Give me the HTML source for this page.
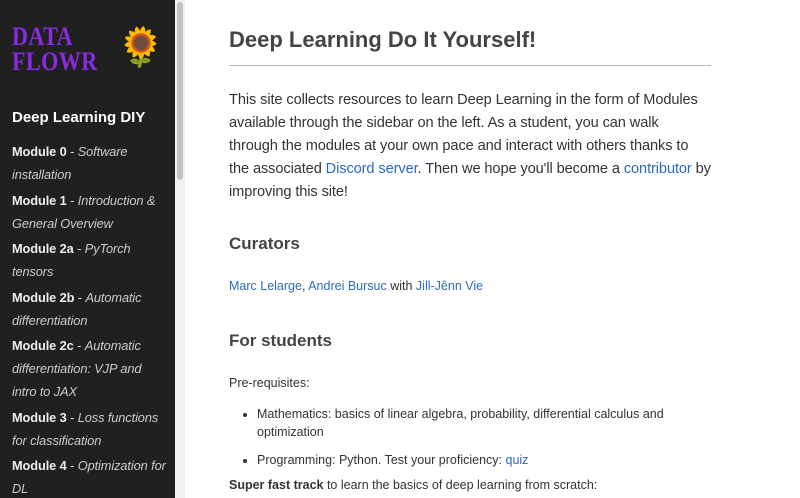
<!DOCTYPE html>
<html><head><style>
body{margin:0;width:800px;height:498px;overflow:hidden;font-family:"Liberation Sans",sans-serif;background:#fff;}
#side{position:absolute;left:0;top:0;width:175px;height:498px;background:#202020;color:#ddd;overflow:hidden;}
#sb{position:absolute;left:175px;top:0;width:10px;height:498px;background:#f0f0f0;}
#thumb{position:absolute;left:2px;top:2px;width:6px;height:178px;background:#c2c2c2;border-radius:3px;}
.logo{position:absolute;left:12px;top:24px;color:#8a2be2;font-family:"Liberation Serif",serif;font-weight:bold;font-size:26px;line-height:25px;letter-spacing:0.5px;transform:scaleX(0.85);transform-origin:left;}
.sun{position:absolute;left:117px;top:28px;font-size:38px;line-height:40px;}
.diy{position:absolute;left:12px;top:109px;color:#fff;font-weight:bold;font-size:15px;}
.mods{position:absolute;left:12px;top:140px;font-size:12.8px;line-height:23px;white-space:nowrap;letter-spacing:-0.1px;}
.mods div{margin-bottom:2.5px;}
.mods b{color:#eee;}
.mods i{color:#ccc;}
#main{position:absolute;left:229px;top:0;width:482px;color:#333;}
h1{margin:27px 0 0;font-size:22px;color:#444;padding-bottom:12px;border-bottom:1px solid #bbb;}
p.intro{margin:23px 0 0;font-size:14.6px;line-height:23px;white-space:nowrap;letter-spacing:-0.1px;}
a{color:#2a6ac4;text-decoration:none;}
h2{font-size:17px;color:#444;margin:0;position:absolute;left:0;}
.sm{font-size:12.5px;position:absolute;left:0;}
ul{margin:0;padding-left:28px;}
</style></head><body>
<div id="side">
<div class="logo">DATA<br>FLOWR</div>
<div class="sun">🌻</div>
<div class="diy">Deep Learning DIY</div>
<div class="mods">
<div><b>Module 0</b> - <i>Software<br>installation</i></div>
<div><b>Module 1</b> - <i>Introduction &amp;<br>General Overview</i></div>
<div><b>Module 2a</b> - <i>PyTorch<br>tensors</i></div>
<div><b>Module 2b</b> - <i>Automatic<br>differentiation</i></div>
<div><b>Module 2c</b> - <i>Automatic<br>differentiation: VJP and<br>intro to JAX</i></div>
<div><b>Module 3</b> - <i>Loss functions<br>for classification</i></div>
<div><b>Module 4</b> - <i>Optimization for<br>DL</i></div>
</div>
</div>
<div id="sb"><div id="thumb"></div></div>
<div id="main">
<h1>Deep Learning Do It Yourself!</h1>
<p class="intro">This site collects resources to learn Deep Learning in the form of Modules<br>available through the sidebar on the left. As a student, you can walk<br>through the modules at your own pace and interact with others thanks to<br>the associated <a>Discord server</a>. Then we hope you'll become a <a>contributor</a> by<br>improving this site!</p>
<h2 style="top:234px">Curators</h2>
<div class="sm" style="top:279px"><a>Marc Lelarge</a>, <a>Andrei Bursuc</a> with <a>Jill-Jênn Vie</a></div>
<h2 style="top:331px">For students</h2>
<div class="sm" style="top:376px">Pre-requisites:</div>
<div class="sm" style="top:405px;width:482px;line-height:18px">
<ul><li>Mathematics: basics of linear algebra, probability, differential calculus and<br>optimization</li>
<li style="margin-top:10px">Programming: Python. Test your proficiency: <a>quiz</a></li></ul></div>
<div class="sm" style="top:478px"><b>Super fast track</b> to learn the basics of deep learning from scratch:</div>
</div>
</body></html>
